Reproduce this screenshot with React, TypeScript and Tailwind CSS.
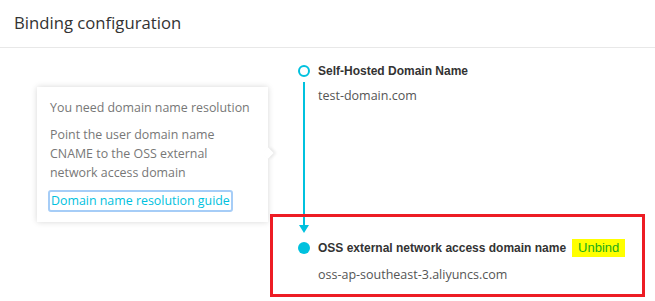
export default function App() {
  return (
    <div className="w-[655px] h-[301px] bg-white overflow-hidden font-['Open_Sans',sans-serif]">
      <div className="h-[48px] border-b border-[#e8e8e8] pl-[14px] flex items-center">
        <h2 className="text-[16.7px] text-[#333] leading-none">Binding configuration</h2>
      </div>

      <div className="flex">
        <div className="w-[270px] shrink-0">
          <div className="relative ml-[37px] mt-[39px] w-[231px] h-[135px] bg-white shadow-[0_0_6px_rgba(0,0,0,0.16)] pl-[13px] pt-[11px] text-[12.4px] leading-[19px] text-[#777]">
            <span className="absolute right-[-4px] top-[62px] w-[8px] h-[8px] bg-white rotate-45 shadow-[2px_-2px_3px_rgba(0,0,0,0.08)]" />
            <p>You need domain name resolution</p>
            <p className="mt-[8px]">
              Point the user domain name
              <br />
              CNAME to the OSS external
              <br />
              network access domain
            </p>
            <a className="inline-block mt-[8px] px-[1px] leading-[18px] text-[#00c1de] border-2 border-[#a6cdf7] rounded-[3px] -ml-[2px]">
              Domain name resolution guide
            </a>
          </div>
        </div>

        <div className="flex-1 pt-[12px]">
          <div className="grid grid-cols-[12px_1fr] gap-x-[8px] ml-[28px]">
            <div className="h-[22px] flex items-center">
              <span className="w-[12px] h-[12px] rounded-full border-2 border-[#00c1de]" />
            </div>
            <div className="h-[22px] flex items-center font-['Liberation_Sans',sans-serif] font-bold text-[12px] text-[#333]">
              Self-Hosted Domain Name
            </div>
            <div className="flex justify-center">
              <span className="w-[2px] h-[132px] bg-[#00c1de]" />
            </div>
            <div className="mt-[4px] text-[12.5px] leading-[20px] text-[#555]">test-domain.com</div>
          </div>

          <div className="relative w-[375px] h-[83px] border-[3px] border-[#ed1c24]">
            <div className="grid grid-cols-[12px_1fr] gap-x-[8px] ml-[25px]">
              <div className="flex flex-col items-center">
                <span className="w-[2px] h-[8px] bg-[#00c1de]" />
                <span className="w-0 h-0 border-l-[5px] border-r-[5px] border-t-[8px] border-l-transparent border-r-transparent border-t-[#00c1de]" />
              </div>
              <div />
              <div className="h-[22px] mt-[4px] flex items-center">
                <span className="w-[12px] h-[12px] rounded-full bg-[#00c1de]" />
              </div>
              <div className="h-[22px] mt-[4px] flex items-center gap-[6px] font-['Liberation_Sans',sans-serif] text-[12px]">
                <span className="font-bold text-[#333]">OSS external network access domain name</span>
                <span className="h-[18px] px-[6px] flex items-center bg-[#ffff00] text-[#1aab1a] text-[13px]">Unbind</span>
              </div>
              <div />
              <div className="mt-[6px] text-[12.5px] leading-[20px] text-[#555]">oss-ap-southeast-3.aliyuncs.com</div>
            </div>
          </div>
        </div>
      </div>
    </div>
  );
}
